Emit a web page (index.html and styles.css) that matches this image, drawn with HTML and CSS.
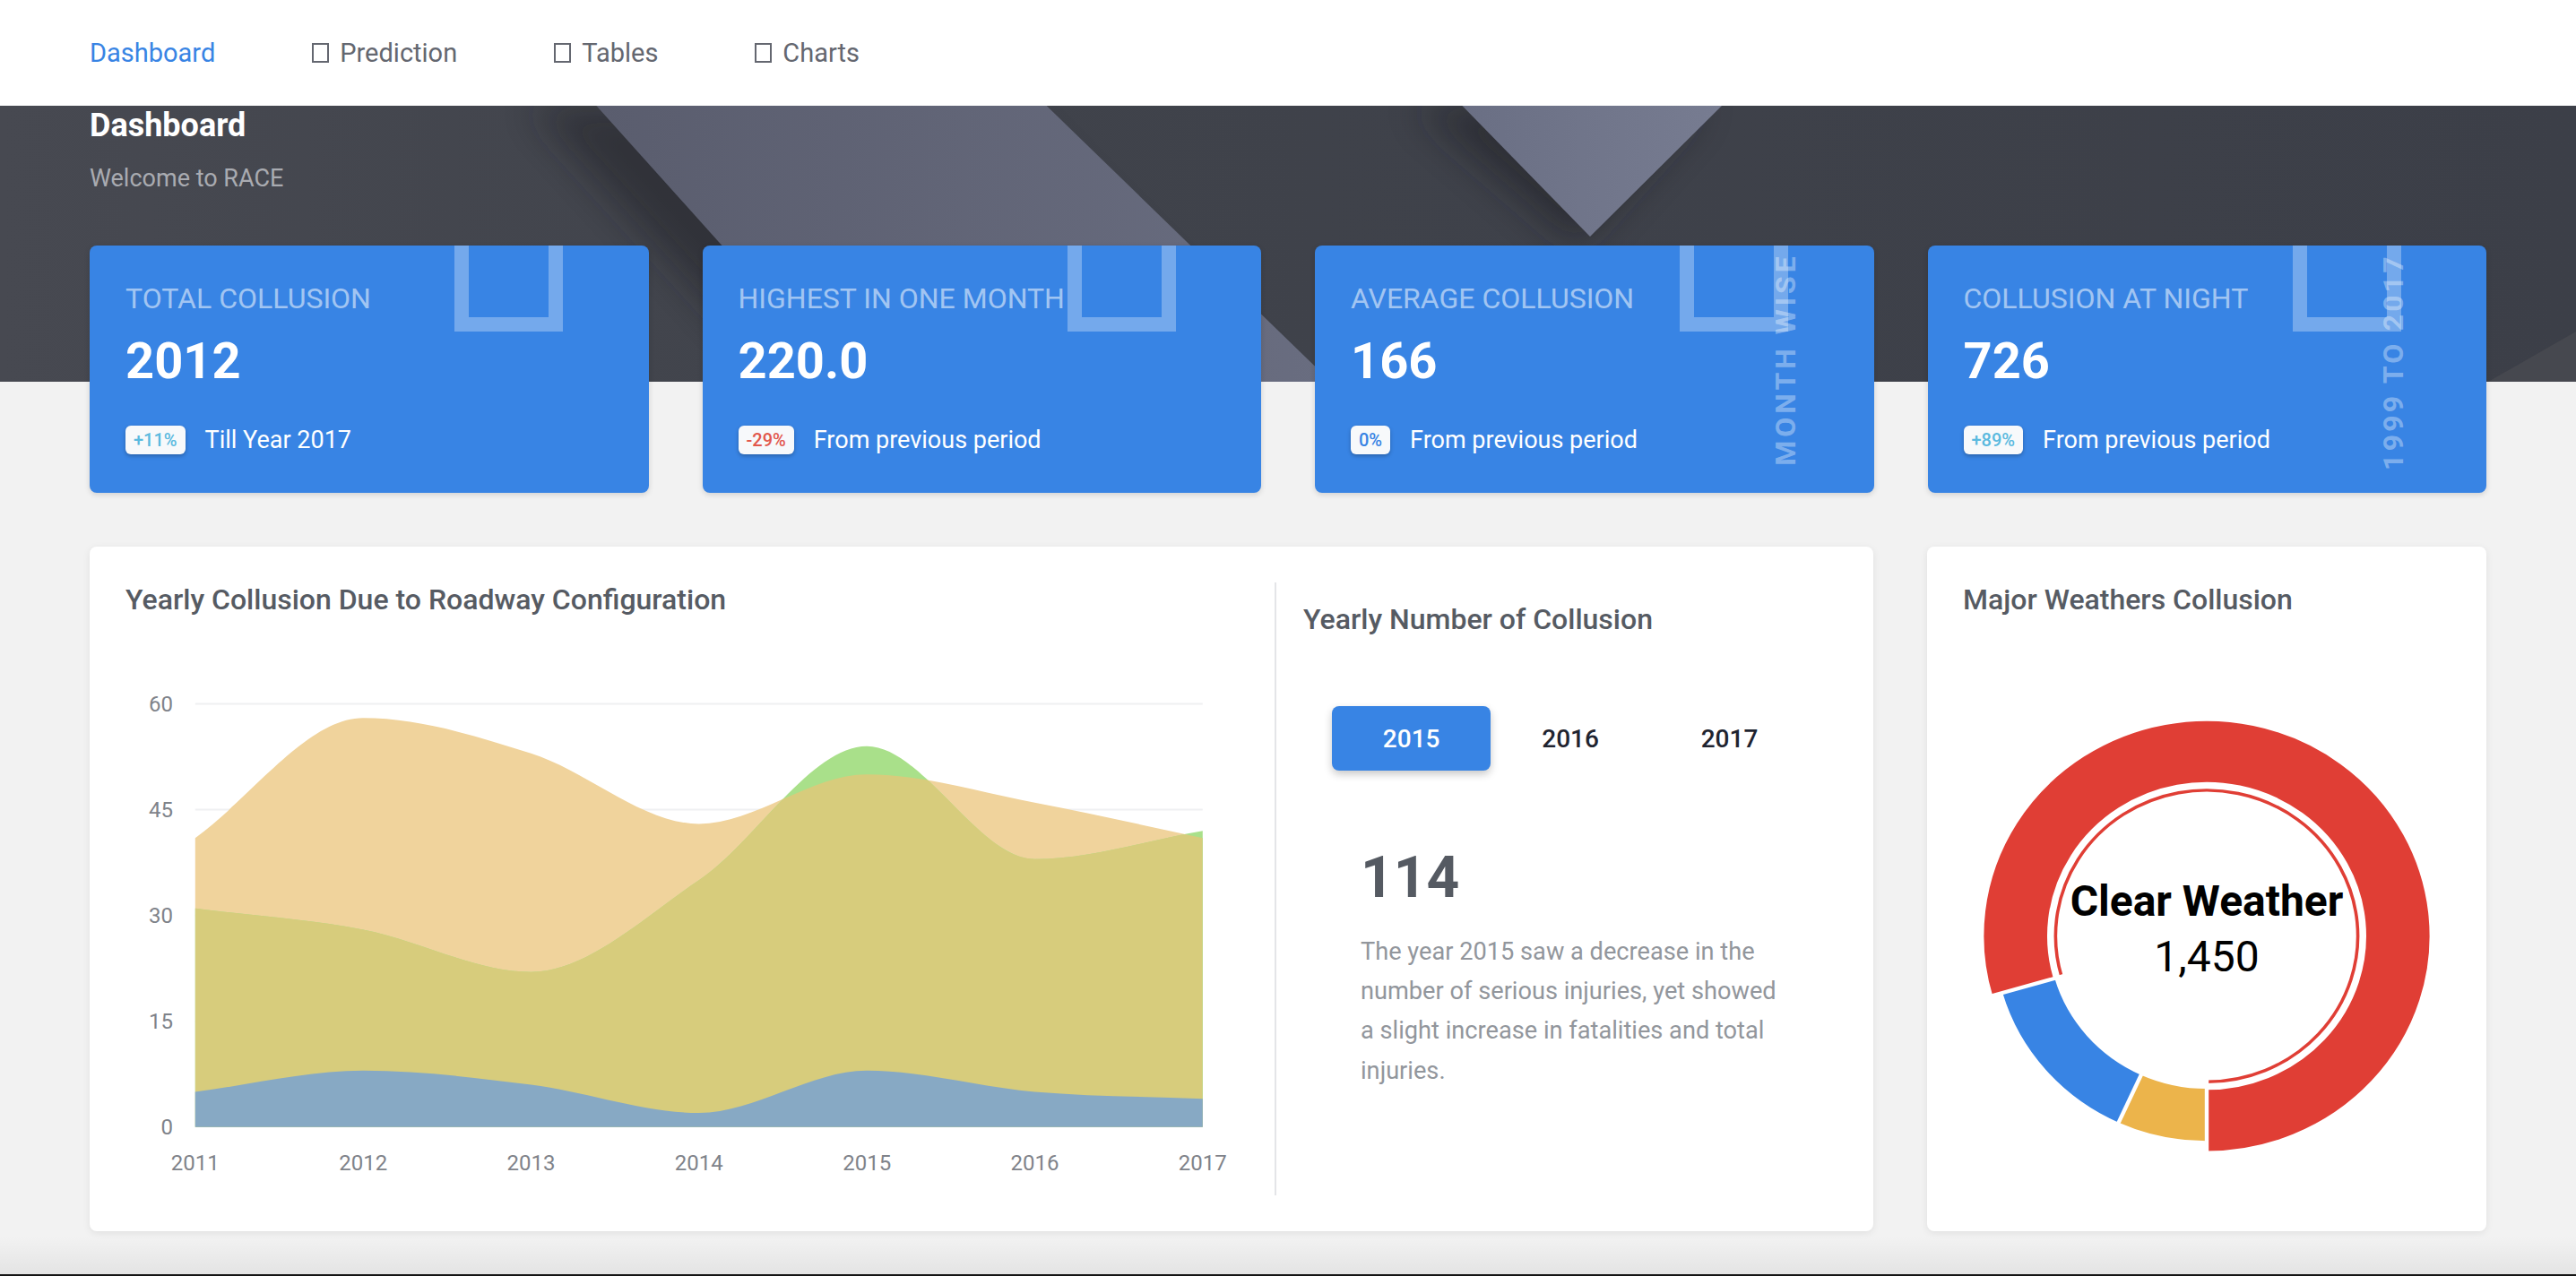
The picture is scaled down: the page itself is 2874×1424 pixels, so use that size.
FILE: index.html
```html
<!DOCTYPE html>
<html lang="en">
<head>
<meta charset="utf-8">
<title>RACE Dashboard</title>
<link rel="stylesheet" href="styles.css">
</head>
<body>
<nav class="topnav">
  <a class="nav-link active">Dashboard</a>
  <a class="nav-link"><span class="tofu"></span>Prediction</a>
  <a class="nav-link"><span class="tofu"></span>Tables</a>
  <a class="nav-link"><span class="tofu"></span>Charts</a>
</nav>

<header class="hero">
  <svg class="hero-bg" viewBox="0 0 1437 154" preserveAspectRatio="none" aria-hidden="true">
    <defs>
      <linearGradient id="baseG" x1="0" y1="0" x2="1" y2="0">
        <stop offset="0" stop-color="#474951"/>
        <stop offset="0.35" stop-color="#40434b"/>
        <stop offset="1" stop-color="#3c3f48"/>
      </linearGradient>
      <linearGradient id="bandG" x1="0" y1="0" x2="1" y2="0">
        <stop offset="0" stop-color="#5a5d6e"/>
        <stop offset="1" stop-color="#696d80"/>
      </linearGradient>
      <linearGradient id="triG" x1="0" y1="0" x2="1" y2="0">
        <stop offset="0" stop-color="#6a6f84"/>
        <stop offset="1" stop-color="#777c91"/>
      </linearGradient>
      <filter id="blurS" x="-50%" y="-50%" width="200%" height="200%">
        <feGaussianBlur stdDeviation="10"/>
      </filter>
    </defs>
    <rect x="0" y="0" width="1437" height="154" fill="url(#baseG)"/>
    <polygon points="296,0 560,0 712,154 436,154" fill="#1e1f24" opacity="0.45" filter="url(#blurS)"/>
    <polygon points="332.7,0 583.8,0 742.4,154 471,154" fill="url(#bandG)"/>
    <polygon points="790,0 950,0 880,78" fill="#1e1f24" opacity="0.5" filter="url(#blurS)"/>
    <polygon points="815.7,0 960.5,0 887,73" fill="url(#triG)"/>
    <polygon points="1437,126 1437,154 1388,154" fill="#46484f"/>
  </svg>
  <h1 class="hero-title">Dashboard</h1>
  <p class="hero-sub">Welcome to RACE</p>
</header>

<main class="content">
  <section class="stats">
    <div class="stat-card">
      <span class="stat-icon"></span>
      <div class="stat-label">Total Collusion</div>
      <div class="stat-value">2012</div>
      <div class="stat-foot"><span class="badge badge-teal">+11%</span><span>Till Year 2017</span></div>
    </div>
    <div class="stat-card">
      <span class="stat-icon"></span>
      <div class="stat-label">Highest in one month</div>
      <div class="stat-value">220.0</div>
      <div class="stat-foot"><span class="badge badge-red">-29%</span><span>From previous period</span></div>
    </div>
    <div class="stat-card">
      <span class="stat-icon"></span>
      <span class="vtext vtext-a">MONTH WISE</span>
      <div class="stat-label">Average Collusion</div>
      <div class="stat-value">166</div>
      <div class="stat-foot"><span class="badge badge-blue">0%</span><span>From previous period</span></div>
    </div>
    <div class="stat-card">
      <span class="stat-icon"></span>
      <span class="vtext vtext-b">1999 TO 2017</span>
      <div class="stat-label">Collusion at night</div>
      <div class="stat-value">726</div>
      <div class="stat-foot"><span class="badge badge-teal">+89%</span><span>From previous period</span></div>
    </div>
  </section>

  <section class="panels">
    <div class="panel panel-wide">
      <div class="chart-col">
        <h2 class="panel-title">Yearly Collusion Due to Roadway Configuration</h2>
        <svg class="area-chart" width="641" height="325" viewBox="0 0 641 325">
          <g class="grid">
            <line x1="38.9" y1="48.8" x2="600.9" y2="48.8"/>
            <line x1="38.9" y1="107.8" x2="600.9" y2="107.8"/>
            <line x1="38.9" y1="166.8" x2="600.9" y2="166.8"/>
            <line x1="38.9" y1="225.9" x2="600.9" y2="225.9"/>
          </g>
          <g transform="translate(38.9,284.9) scale(93.667,-3.935)">
            <defs>
              <clipPath id="orangeClip">
                <path d="M0,0 L0,41 C0.333,46.667 0.667,58 1,58 C1.333,58 1.667,55.5 2,53 C2.333,50.5 2.667,43 3,43 C3.333,43 3.667,50 4,50 C4.333,50 4.667,47.5 5,46 C5.333,44.5 5.667,42.667 6,41 L6,0 Z"/>
              </clipPath>
            </defs>
            <path fill="#f0d39c" d="M0,0 L0,41 C0.333,46.667 0.667,58 1,58 C1.333,58 1.667,55.5 2,53 C2.333,50.5 2.667,43 3,43 C3.333,43 3.667,50 4,50 C4.333,50 4.667,47.5 5,46 C5.333,44.5 5.667,42.667 6,41 L6,0 Z"/>
            <path fill="#a9e08a" d="M0,0 L0,31 C0.333,30 0.667,29.5 1,28 C1.333,26.5 1.667,22 2,22 C2.333,22 2.667,29.667 3,35 C3.333,40.333 3.667,54 4,54 C4.333,54 4.667,38 5,38 C5.333,38 5.667,40.667 6,42 L6,0 Z"/>
            <path fill="#d7cc7c" clip-path="url(#orangeClip)" d="M0,0 L0,31 C0.333,30 0.667,29.5 1,28 C1.333,26.5 1.667,22 2,22 C2.333,22 2.667,29.667 3,35 C3.333,40.333 3.667,54 4,54 C4.333,54 4.667,38 5,38 C5.333,38 5.667,40.667 6,42 L6,0 Z"/>
            <path fill="#87a9c4" d="M0,0 L0,5 C0.333,6 0.667,8 1,8 C1.333,8 1.667,7 2,6 C2.333,5 2.667,2 3,2 C3.333,2 3.667,8 4,8 C4.333,8 4.667,5.667 5,5 C5.333,4.333 5.667,4.333 6,4 L6,0 Z"/>
          </g>
          <g class="axis-y">
            <text x="26.5" y="52.9">60</text>
            <text x="26.5" y="111.9">45</text>
            <text x="26.5" y="170.9">30</text>
            <text x="26.5" y="230">15</text>
            <text x="26.5" y="289">0</text>
          </g>
          <g class="axis-x">
            <text x="38.9" y="308.9">2011</text>
            <text x="132.6" y="308.9">2012</text>
            <text x="226.2" y="308.9">2013</text>
            <text x="319.9" y="308.9">2014</text>
            <text x="413.6" y="308.9">2015</text>
            <text x="507.2" y="308.9">2016</text>
            <text x="600.9" y="308.9">2017</text>
          </g>
        </svg>
      </div>
      <div class="tabs-col">
        <h2 class="panel-title">Yearly Number of Collusion</h2>
        <div class="year-tabs">
          <span class="year-tab active">2015</span>
          <span class="year-tab">2016</span>
          <span class="year-tab">2017</span>
        </div>
        <div class="year-detail">
          <div class="year-count">114</div>
          <p class="year-text">The year 2015 saw a decrease in the<br>number of serious injuries, yet showed<br>a slight increase in fatalities and total<br>injuries.</p>
        </div>
      </div>
    </div>

    <div class="panel">
      <h2 class="panel-title">Major Weathers Collusion</h2>
      <svg class="donut" width="272" height="272" viewBox="0 0 272 272">
        <g transform="translate(136,140.3) scale(1,0.965) translate(-136,-136)">
          <path d="M33.53,165.57 A106.65,106.65 0 1 1 136,242.65" fill="none" stroke="#e03e35" stroke-width="35.3"/>
          <path d="M93.12,230.09 A103.4,103.4 0 0 1 36.65,164.67" fill="none" stroke="#3884e4" stroke-width="30.2"/>
          <path d="M136,239.4 A103.4,103.4 0 0 1 93.12,230.09" fill="none" stroke="#ecb44b" stroke-width="30.2"/>
          <path d="M55,159.38 A84.3,84.3 0 1 1 136,220.3" fill="none" stroke="#e03e35" stroke-width="1.8"/>
          <g class="sep">
            <line x1="59.14" y1="158.18" x2="13.98" y2="171.22"/>
            <line x1="136" y1="216" x2="136" y2="263"/>
            <line x1="102.82" y1="208.8" x2="83.33" y2="251.57"/>
          </g>
        </g>
        <text class="donut-label" x="136" y="129.2">Clear Weather</text>
        <text class="donut-value" x="136" y="159.8">1,450</text>
      </svg>
    </div>
  </section>
</main>
</body>
</html>
```

FILE: styles.css
```css
html {
  zoom: 2;
}

* {
  box-sizing: border-box;
}

body {
  margin: 0;
  height: 712px;
  font-family: Roboto, "Noto Sans", "Liberation Sans", Arial, sans-serif;
  color: #333;
  background:
    linear-gradient(to top, #151515 0, #151515 1px, transparent 1px),
    linear-gradient(to bottom, rgba(0, 0, 0, 0) 0, rgba(0, 0, 0, 0) 690px, rgba(0, 0, 0, 0.06) 711px),
    #f2f2f2;
}

/* ---------- top navigation ---------- */
.topnav {
  height: 59px;
  background: #fff;
  display: flex;
  align-items: center;
  gap: 54px;
  padding-left: 50px;
}

.nav-link {
  display: flex;
  align-items: center;
  gap: 6px;
  font-size: 14.5px;
  line-height: 20px;
  color: #646770;
  text-decoration: none;
}

.nav-link.active {
  color: #3884e4;
}

.tofu {
  display: inline-block;
  width: 9.5px;
  height: 11px;
  border: 1.4px solid #646770;
}

/* ---------- hero band ---------- */
.hero {
  position: relative;
  height: 154px;
  padding: 0 50px;
  overflow: hidden;
  background: #3d4049;
  color: #fff;
}

.hero-bg {
  position: absolute;
  left: 0;
  top: 0;
  width: 100%;
  height: 100%;
}

.hero-title {
  position: relative;
  margin: 0;
  font-size: 18px;
  font-weight: 700;
  line-height: 22px;
}

.hero-sub {
  position: relative;
  margin: 8.5px 0 0;
  font-size: 13.5px;
  line-height: 20px;
  color: #a9abb1;
}

/* ---------- stat cards ---------- */
.content {
  position: relative;
  margin-top: -76px;
  padding: 0 50px;
}

.stats {
  display: grid;
  grid-template-columns: repeat(4, 1fr);
  gap: 30px;
}

.stat-card {
  position: relative;
  height: 138px;
  padding: 20px;
  overflow: hidden;
  border-radius: 4px;
  background: #3884e4;
  color: #fff;
  box-shadow: 0 1px 3px rgba(0, 0, 0, 0.14);
}

.stat-icon {
  position: absolute;
  left: 203.5px;
  top: 0;
  width: 60.5px;
  height: 48px;
  border: 8px solid rgba(255, 255, 255, 0.3);
  border-top: 0;
}

.stat-label {
  position: relative;
  margin-top: -0.5px;
  font-size: 16px;
  line-height: 20px;
  text-transform: uppercase;
  white-space: nowrap;
  color: rgba(255, 255, 255, 0.55);
}

.stat-value {
  margin-top: 8px;
  font-size: 28px;
  font-weight: 700;
  line-height: 34px;
}

.stat-foot {
  display: flex;
  align-items: center;
  gap: 11px;
  height: 16px;
  margin-top: 19px;
  font-size: 13.5px;
  line-height: 14px;
}

.badge {
  height: 16px;
  padding: 0 4.5px;
  border-radius: 3px;
  background: #f7f9fb;
  box-shadow: 0 1px 2px rgba(0, 0, 0, 0.25);
  font-size: 10px;
  font-weight: 500;
  line-height: 16px;
}

.badge-teal {
  color: #5bbadf;
}

.badge-red {
  color: #e2574c;
}

.badge-blue {
  color: #3884e4;
}

.vtext {
  position: absolute;
  top: 63.5px;
  transform: translate(-50%, -50%) rotate(-90deg);
  font-size: 16px;
  font-weight: 700;
  letter-spacing: 2px;
  line-height: 16px;
  white-space: nowrap;
  color: rgba(255, 255, 255, 0.36);
}

.vtext-a {
  left: 262.5px;
}

.vtext-b {
  top: 65px;
  left: 259.5px;
  letter-spacing: 1.6px;
}

/* ---------- panels ---------- */
.panels {
  display: grid;
  grid-template-columns: repeat(4, 1fr);
  gap: 30px;
  margin-top: 30px;
}

.panel {
  height: 382px;
  padding: 20px;
  border-radius: 4px;
  background: #fff;
  box-shadow: 0 1px 4px rgba(0, 0, 0, 0.08);
}

.panel-wide {
  grid-column: span 3;
  display: flex;
}

.panel-title {
  margin: 0;
  font-size: 16px;
  font-weight: 500;
  line-height: 19px;
  color: #565b63;
  white-space: nowrap;
}

.chart-col {
  flex: none;
  width: 641px;
}

.area-chart {
  display: block;
}

.grid line {
  stroke: #eff0f2;
  stroke-width: 1;
}

.axis-y text,
.axis-x text {
  font-family: Roboto, "Noto Sans", sans-serif;
  font-size: 12px;
  fill: #7f838a;
}

.axis-y text {
  text-anchor: end;
}

.axis-x text {
  text-anchor: middle;
}

.tabs-col {
  flex: 1;
  padding: 11px 0 0 15px;
  border-left: 1px solid #e4e5e8;
}

.year-tabs {
  display: flex;
  margin: 39px 0 0 16px;
}

.year-tab {
  display: flex;
  align-items: center;
  justify-content: center;
  width: 88.7px;
  height: 36px;
  border-radius: 4px;
  font-size: 14px;
  font-weight: 500;
  color: #1f2430;
}

.year-tab.active {
  background: #3884e4;
  color: #fff;
  box-shadow: 0 2px 5px rgba(0, 0, 0, 0.22);
}

.year-detail {
  margin: 40px 0 0 32px;
}

.year-count {
  font-size: 32px;
  font-weight: 700;
  line-height: 40px;
  color: #555a62;
}

.year-text {
  margin: 10px 0 0;
  font-size: 13.6px;
  line-height: 22.1px;
  white-space: nowrap;
  color: #92969c;
}

/* ---------- donut ---------- */
.donut {
  display: block;
  margin: 38px auto 0;
}

.sep line {
  stroke: #fff;
  stroke-width: 2.2;
}

.donut-label,
.donut-value {
  font-family: Roboto, "Noto Sans", sans-serif;
  font-size: 24px;
  text-anchor: middle;
  fill: #000;
}

.donut-label {
  font-weight: 700;
}
```
